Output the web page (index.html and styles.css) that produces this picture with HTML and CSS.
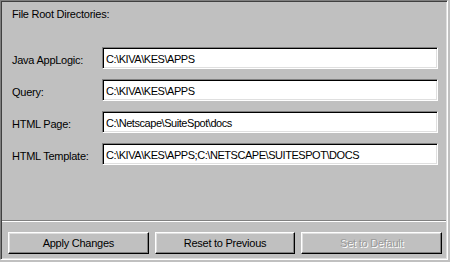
FILE: index.html
```html
<!DOCTYPE html>
<html lang="en">

<head>
  <meta charset="UTF-8" />
  <title>File Root Directories</title>
  <link rel="stylesheet" href="styles.css">
</head>

<body>

  <div class="panel">
    <div class="main">
      <div class="title">File Root Directories:</div>

      <div class="rows">
        <div class="row">
          <label>Java AppLogic:</label>
          <input type="text" class="field" value="C:\KIVA\KES\APPS" />
        </div>
        <div class="row">
          <label>Query:</label>
          <input type="text" class="field" value="C:\KIVA\KES\APPS" />
        </div>
        <div class="row">
          <label>HTML Page:</label>
          <input type="text" class="field" value="C:\Netscape\SuiteSpot\docs" />
        </div>
        <div class="row">
          <label>HTML Template:</label>
          <input type="text" class="field" value="C:\KIVA\KES\APPS;C:\NETSCAPE\SUITESPOT\DOCS" />
        </div>
      </div>
    </div>

    <div class="footer">
      <button type="button">Apply Changes</button>
      <button type="button">Reset to Previous</button>
      <button type="button" disabled>Set to Default</button>
    </div>
  </div>

</body>
</html>
```

FILE: styles.css
```css
body {
  margin: 0;
  background: #c0c0c0;
  font-family: "Liberation Sans", Arial, sans-serif;
  font-size: 11px;
  letter-spacing: -0.25px;
  color: #000;
}

.panel {
  width: 448px;
  height: 260px;
  box-sizing: border-box;
  display: flex;
  flex-direction: column;
  border: 1px solid;
  border-color: #808080 #fff #fff #808080;
  box-shadow: inset 1px 1px #404040, inset -1px -1px #dfdfdf;
  padding: 1px;
}

.main {
  flex: 1;
  padding: 6px 8px 0 10px;
}

.title {
  line-height: 13px;
}

.rows {
  margin-top: 26px;
  display: flex;
  flex-direction: column;
  gap: 10px;
}

.row {
  display: flex;
  align-items: center;
}

.row label {
  width: 90px;
  flex-shrink: 0;
  padding-top: 3px;
}

.field {
  width: 336px;
  height: 22px;
  box-sizing: border-box;
  margin: 0;
  padding: 1px 3px 0 3px;
  font-family: inherit;
  font-size: 11px;
  letter-spacing: -0.45px;
  color: #000;
  background: #fff;
  border: 1px solid;
  border-color: #808080 #fff #fff #808080;
  box-shadow: inset 1px 1px #000, inset -1px -1px #dfdfdf;
  outline: none;
}

.footer {
  display: flex;
  gap: 6px;
  padding: 11px 4px 4px 6px;
  border-top: 1px solid #808080;
  box-shadow: inset 0 1px #fff;
}

button {
  flex: 1;
  height: 22px;
  margin: 0;
  padding: 0;
  font-family: inherit;
  font-size: 11px;
  letter-spacing: -0.25px;
  color: #000;
  background: #c0c0c0;
  border: 1px solid;
  border-color: #fff #000 #000 #fff;
  box-shadow: inset -1px -1px #808080, inset 1px 1px #dfdfdf;
}

button:disabled {
  color: #9a9a9a;
  text-shadow: 1px 1px #fff;
}
```
